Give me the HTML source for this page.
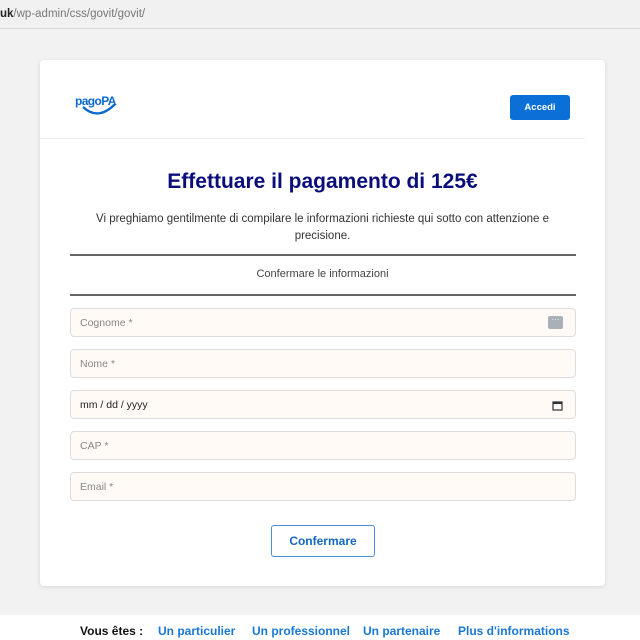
<!DOCTYPE html>
<html><head><meta charset="utf-8">
<style>
*{box-sizing:border-box;margin:0;padding:0}
body{width:640px;height:640px;overflow:hidden;background:#f2f2f2;font-family:"Liberation Sans",sans-serif;position:relative}
.addr{position:absolute;left:0;top:0;width:640px;height:29px;background:#f1f1f1;border-bottom:1px solid #d8d8d8;font-size:11.5px;color:#777;padding:8px 0 0 0}
.addr b{color:#222;font-weight:bold}
.card{position:absolute;left:40px;top:60px;width:565px;height:526px;background:#fff;border-radius:4px;box-shadow:0 1px 4px rgba(0,0,0,.12)}
.logo{position:absolute;left:35px;top:34px;color:#0a6ad0;font-weight:bold;font-size:12px;letter-spacing:-0.6px}
.acc{position:absolute;left:470px;top:35px;width:60px;height:25px;background:#0a6fd6;color:#fff;border-radius:3px;font-size:9.5px;font-weight:bold;text-align:center;line-height:25px}
.hr1{position:absolute;left:0;top:78px;width:545px;height:1px;background:#eee}
h1{position:absolute;left:0;width:565px;top:110px;text-align:center;font-size:21px;color:#0b0e7a;font-weight:bold}
.p{position:absolute;left:40px;width:485px;top:151px;text-align:center;font-size:11.5px;color:#333;line-height:17px}
.l1{position:absolute;left:30px;width:506px;top:194px;height:1.5px;background:#666}
.l2{position:absolute;left:30px;width:506px;top:234px;height:1.5px;background:#666}
.ci{position:absolute;left:0;width:565px;top:208px;text-align:center;font-size:11px;color:#444}
.in{position:absolute;left:30px;width:506px;height:29px;background:#fffaf6;border:1px solid #ddd;border-radius:4px;font-size:10.5px;color:#888;padding:8px 0 0 9px}
.btn{position:absolute;left:231px;top:465px;width:104px;height:32px;border:1px solid #4a8fd8;border-radius:3px;color:#1467c4;font-weight:bold;font-size:12px;text-align:center;line-height:30px}
.foot{position:absolute;left:0;top:615px;width:640px;height:25px;background:#fff;font-size:12px;font-weight:bold;color:#1a78d2}
.foot span{position:absolute;top:9px}
</style></head><body>
<div class="addr"><b>uk</b>/wp-admin/css/govit/govit/</div>
<div class="card">
 <div class="logo">pagoPA
  <svg width="44" height="14" style="position:absolute;left:6px;top:10px" viewBox="0 0 44 14"><path d="M2 3 Q18 18 36 -2" stroke="#0a6ad0" stroke-width="2.4" fill="none"/></svg>
 </div>
 <div class="acc">Accedi</div>
 <div class="hr1"></div>
 <h1>Effettuare il pagamento di 125€</h1>
 <div class="p">Vi preghiamo gentilmente di compilare le informazioni richieste qui sotto con attenzione e precisione.</div>
 <div class="l1"></div>
 <div class="ci">Confermare le informazioni</div>
 <div class="l2"></div>
 <div class="in" style="top:248px">Cognome *<span style="position:absolute;right:12px;top:7px;width:15px;height:13px;background:#aab0b8;border-radius:2px;color:#fff;font-size:8px;line-height:8px;text-align:center">···</span></div>
 <div class="in" style="top:289px">Nome *</div>
 <div class="in" style="top:330px;color:#222">mm / dd / yyyy
  <svg width="11" height="11" viewBox="0 0 11 11" style="position:absolute;right:12px;top:9px"><rect x="1" y="2" width="9" height="8" fill="none" stroke="#333" stroke-width="1.2"/><rect x="1" y="2" width="9" height="2" fill="#333"/></svg></div>
 <div class="in" style="top:371px">CAP *</div>
 <div class="in" style="top:412px">Email *</div>
 <div class="btn">Confermare</div>
</div>
<div class="foot">
 <span style="left:80px;color:#111">Vous êtes :</span>
 <span style="left:158px">Un particulier</span>
 <span style="left:252px">Un professionnel</span>
 <span style="left:363px">Un partenaire</span>
 <span style="left:458px">Plus d'informations</span>
</div>
</body></html>
